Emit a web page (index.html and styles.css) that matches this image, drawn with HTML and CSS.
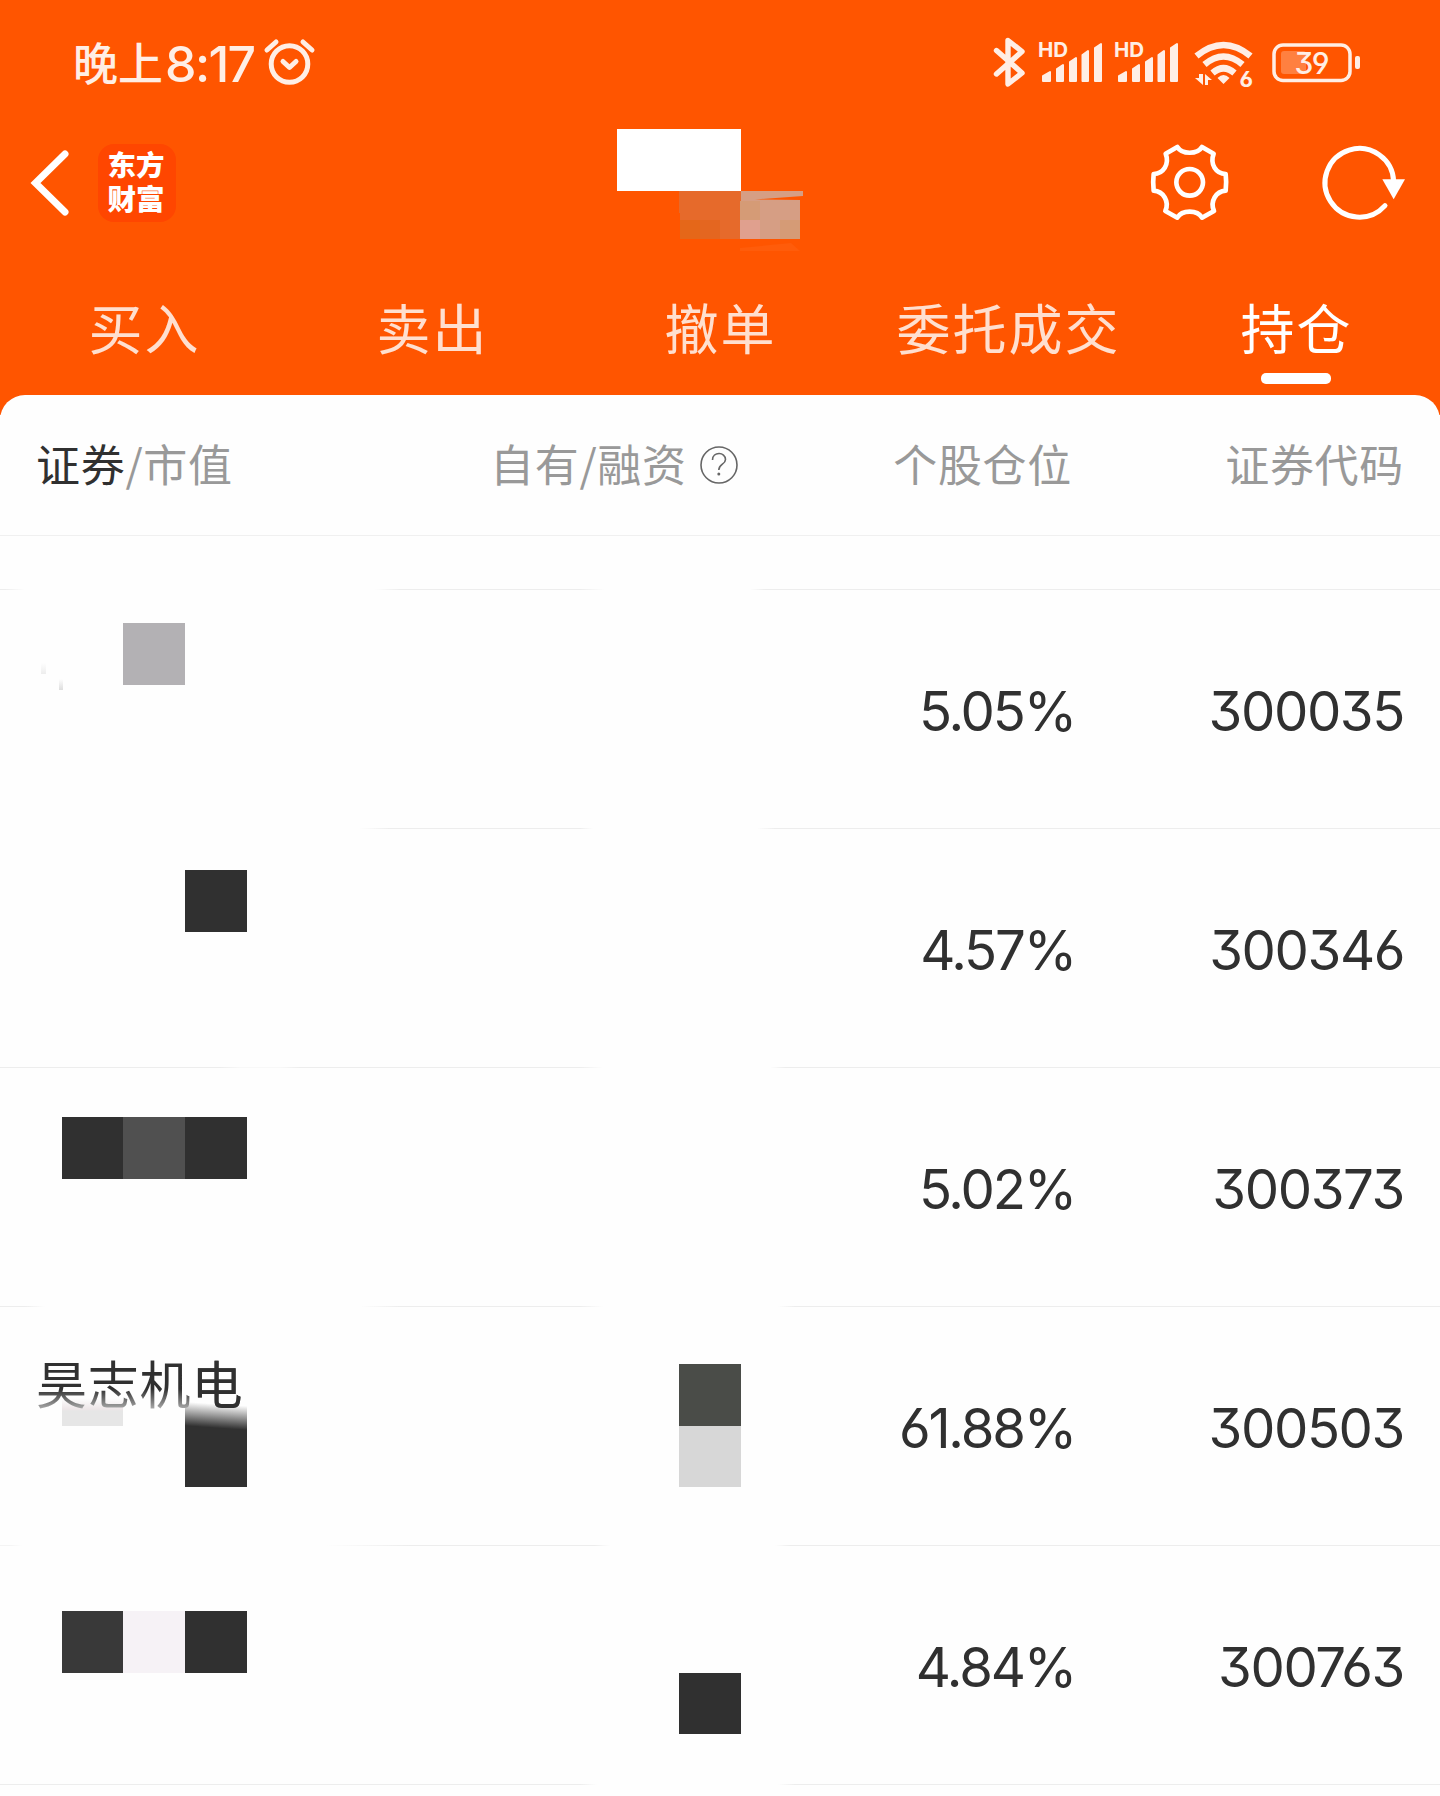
FILE: index.html
```
<!DOCTYPE html>
<html lang="zh-CN">
<head>
  <meta charset="UTF-8">
  <title>持仓</title>
  <link rel="stylesheet" href="styles.css">
</head>
<body>

<header class="header">
  <div class="status-bar">
    <div class="clock"><span class="clock-period">晚上</span><span class="clock-time">8:17</span></div>
    <svg class="alarm" width="52" height="48" viewBox="263 38 52 48">
      <circle cx="289.5" cy="64" r="18.3"/>
      <path d="M267 50L276 42M303 42L312 50M283 61.5L289.5 67.5L296 61.5"/>
    </svg>

    <div class="status-icons">
      <svg class="bluetooth" width="31" height="50" viewBox="994 37 31 50">
        <path d="M996.5 50.5L1022 73L1008 84V40.5L1022 51.5L996.5 74"/>
      </svg>
      <svg class="signal" width="64" height="50" viewBox="1038 38 64 50">
        <text x="1038" y="58">HD</text>
        <path d="M1043 77L1050 73V82H1043ZM1057 70L1063 66V82H1057ZM1070 63L1076 59V82H1070ZM1082.500 56L1088 52V82H1082.500ZM1095 49L1101 45V82H1095Z"/>
      </svg>
      <svg class="signal" width="64" height="50" viewBox="1038 38 64 50">
        <text x="1038" y="58">HD</text>
        <path d="M1043 77L1050 73V82H1043ZM1057 70L1063 66V82H1057ZM1070 63L1076 59V82H1070ZM1082.500 56L1088 52V82H1082.500ZM1095 49L1101 45V82H1095Z"/>
      </svg>
      <svg class="wifi" width="60" height="54" viewBox="1194 37 60 54">
        <path class="arc" d="M1196.500 56Q1223.500 34 1250.500 56M1204.500 64.500Q1223.500 48.500 1242.500 64.500M1212.500 73Q1223.500 63.500 1234.500 73"/>
        <path d="M1217.500 78Q1223.500 72 1229.500 78L1223.500 84Z"/>
        <path d="M1199 74H1203V85L1195 78H1199ZM1205 85V74L1212 80H1208V85Z"/>
        <text x="1239.5" y="86.5">6</text>
      </svg>
      <svg class="battery" width="90" height="40" viewBox="1271 42 90 40">
        <rect class="level" x="1281" y="51" width="25" height="23" rx="3"/>
        <rect class="shell" x="1274" y="45" width="76" height="35.500" rx="9"/>
        <rect x="1355" y="56" width="5" height="13" rx="2"/>
        <text x="1294.500" y="74">39</text>
      </svg>
    </div>
  </div>

  <div class="nav-bar">
    <svg class="back" width="38" height="66" viewBox="31 150 38 66">
      <path d="M65 154L35.500 183L65 212"/>
    </svg>
    <div class="logo">东方<br>财富</div>
    <svg class="gear" width="80" height="77" viewBox="570 434 240 231">
      <circle cx="689" cy="546" r="40"/>
      <path d="M652 440C666 463 712 463 726 440L761 460C749 492 768 520 797 521Q800 546 797 571C768 573 749 603 762 632L726 652C712 628 666 628 652 652L616 632C629 603 610 573 581 571Q578 546 581 521C610 520 629 492 617 460Z"/>
    </svg>
    <svg class="refresh" width="84" height="76" viewBox="1083 435 252 228">
      <path class="ring" d="M1301 545A103 103 0 1 0 1275 617"/>
      <path d="M1267 538H1335L1301 598Z"/>
    </svg>
    <!-- hidden account name -->
    <svg class="account" width="190" height="130" viewBox="617 125 190 130">
      <rect x="617" y="129" width="124" height="62" fill="#fff"/>
      <path d="M679 191H741V239H680V213H679Z" fill="#e66a2b"/>
      <path d="M680 220H700V239H680Z" fill="#e56719"/>
      <path d="M700 220H720V239H700Z" fill="#e46620"/>
      <path d="M741 191H803V196L755 199.500L800 200V239H740V201H741Z" fill="#d69e84"/>
      <path d="M740 201H760V220H740Z" fill="#d59b76"/>
      <path d="M740 220H760V239H740Z" fill="#e0a08e"/>
      <path d="M780 220H800V239H780Z" fill="#d59b76"/>
      <path d="M740 248L791 243L800 251H740Z" fill="#ff5c0a"/>
    </svg>
  </div>

  <nav class="tabs">
    <a class="tab">买入</a>
    <a class="tab">卖出</a>
    <a class="tab">撤单</a>
    <a class="tab">委托成交</a>
    <a class="tab active">持仓</a>
  </nav>
</header>

<main class="sheet">
  <div class="table-head">
    <div><b>证券</b>/市值</div>
    <div class="own">自有/融资
      <svg class="help" width="38" height="38" viewBox="0 0 38 38">
        <circle cx="19" cy="19" r="18"/>
        <path d="M12.500 14C12.500 5.500 25.500 5.500 25.500 13.500C25.500 18.500 18.800 18 18.800 24"/>
        <circle class="dot" cx="18.800" cy="28" r="1.500"/>
      </svg>
    </div>
    <div>个股仓位</div>
    <div>证券代码</div>
  </div>
  <div class="row row-cut"></div>
  <div class="row row-1">
    <div class="name"></div>
    <div class="ratio">5.05%</div>
    <div class="code">300035</div>
    <i class="mask m1"></i><i class="smudge s1"></i><i class="smudge s2"></i>
  </div>
  <div class="row row-2">
    <div class="name"></div>
    <div class="ratio">4.57%</div>
    <div class="code">300346</div>
    <i class="mask m2"></i>
  </div>
  <div class="row row-3">
    <div class="name"></div>
    <div class="ratio">5.02%</div>
    <div class="code">300373</div>
    <i class="mask m3"></i>
  </div>
  <div class="row row-4">
    <i class="mask m4"></i><i class="mask m5"></i><i class="mask m6"></i>
    <div class="name">昊志机<span>电</span></div>
    <div class="ratio">61.88%</div>
    <div class="code">300503</div>
  </div>
  <div class="row row-5">
    <div class="name"></div>
    <div class="ratio">4.84%</div>
    <div class="code">300763</div>
    <i class="mask m7"></i><i class="mask m8"></i>
  </div>
</main>

</body>
</html>
```
FILE: styles.css
```
* {
  box-sizing: border-box;
}

body {
  margin: 0;
  width: 1440px;
  height: 1796px;
  overflow: hidden;
  background: #fefefe;
  font-family: "Noto Sans CJK SC", sans-serif;
  color: #303030;
}

svg {
  display: block;
  flex: none;
  overflow: visible;
}

.header {
  height: 415px;
  background: #ff5500;
  color: #fff;
}

/* status bar */
.status-bar {
  display: flex;
  align-items: center;
  height: 124px;
  padding: 0 79px 0 73px;
  color: #ffeee5;
  fill: #ffeee5;
}

.clock {
  display: flex;
  align-items: center;
  width: 190px;
  font-weight: 500;
  line-height: 60px;
  white-space: nowrap;
}

.clock-period {
  font-size: 45px;
  padding-bottom: 1px;
}

.clock-time {
  font-family: Inter, sans-serif;
  font-size: 50px;
  padding-top: 3px;
  margin-left: 2px;
  letter-spacing: -1.6px;
}

.alarm {
  fill: none;
  stroke: #ffeee5;
  stroke-width: 5;
  stroke-linecap: round;
  stroke-linejoin: round;
}

.status-icons {
  display: flex;
  align-items: center;
  margin-left: auto;
}

.status-icons text {
  font-family: Inter, sans-serif;
  font-weight: 600;
}

.bluetooth {
  fill: none;
  stroke: #ffeee5;
  stroke-width: 5.4;
  stroke-linecap: round;
  stroke-linejoin: round;
  margin-right: 13px;
}

.signal {
  margin-right: 12px;
}

.signal path {
  stroke: #ffeee5;
  stroke-width: 2;
  stroke-linejoin: round;
}

.signal text {
  font-size: 20.5px;
  font-weight: 700;
}

.wifi {
  margin: 3px 17px 0 4px;
}

.wifi .arc {
  fill: none;
  stroke: #ffeee5;
  stroke-width: 6.5;
}

.wifi text {
  font-size: 22px;
  font-weight: 700;
  font-feature-settings: "cv03";
}

.battery .shell {
  fill: none;
  stroke: #ffeee5;
  stroke-width: 3.5;
}

.battery .level {
  fill: #ff8040;
}

.battery text {
  font-size: 30px;
  font-weight: 500;
  letter-spacing: -1.5px;
  font-feature-settings: "cv09", "cv04";
}

/* navigation */
.nav-bar {
  position: relative;
  display: flex;
  align-items: center;
  height: 118px;
  padding: 0 35px 0 31px;
}

.back {
  fill: none;
  stroke: #fff;
  stroke-width: 7;
  stroke-linecap: round;
}

.logo {
  width: 78px;
  height: 78px;
  margin-left: 29px;
  padding: 3px 2px 0 0;
  border-radius: 16px;
  background: #ff4600;
  font-size: 28.5px;
  font-weight: 900;
  line-height: 34px;
  text-align: center;
}

.gear {
  margin-left: auto;
  fill: none;
  stroke: #fff;
  stroke-width: 14;
  stroke-linejoin: round;
}

.refresh {
  margin-left: 91px;
  fill: #fff;
}

.refresh .ring {
  fill: none;
  stroke: #fff;
  stroke-width: 15;
  stroke-linecap: round;
}

.account {
  position: absolute;
  left: 617px;
  top: 1px;
}

/* tabs */
.tabs {
  display: grid;
  grid-template-columns: repeat(5, 1fr);
  height: 153px;
}

.tab {
  display: flex;
  flex-direction: column;
  align-items: center;
  padding-top: 45px;
  font-size: 54px;
  line-height: 80px;
  letter-spacing: 2px;
  text-indent: 1px;
  color: #ffdfcf;
}

.tab.active {
  color: #fff;
}

.tab.active::after {
  content: "";
  width: 70px;
  height: 11px;
  margin-top: 6px;
  border-radius: 5px;
  background: #fff;
}

/* holdings */
.sheet {
  margin-top: -20px;
  border-radius: 25px 25px 0 0;
  background: #fefefe;
}

.table-head {
  display: grid;
  grid-template-columns: 454px 250px 332px 332px;
  height: 141px;
  padding: 0 36px;
  border-bottom: 1px solid #f0f0f0;
  font-size: 44px;
  line-height: 136px;
  letter-spacing: 0.7px;
  color: #999;
  white-space: nowrap;
}

.table-head b {
  font-weight: 400;
  color: #303030;
}

.table-head div:nth-child(n+3) {
  text-align: right;
}

.own {
  display: flex;
  align-items: center;
  gap: 13px;
  height: 136px;
}

.help {
  margin-top: 3px;
  fill: none;
  stroke: #666;
  stroke-width: 1.6;
}

.help .dot {
  fill: #666;
  stroke: none;
}

.row {
  --line: #ededed;
  position: relative;
  display: grid;
  grid-template-columns: 705px 334px 329px;
  height: 239px;
  padding: 0 36px;
  background-repeat: no-repeat;
  background-position: 0 100%;
  background-size: 100% 1px;
}

.row-cut {
  height: 54px;
  background-image: linear-gradient(90deg, var(--line) 5px, transparent 25px 375px, var(--line) 400px 580px, transparent 605px 750px, var(--line) 765px);
}

.row-1 {
  background-image: linear-gradient(90deg, transparent 360px, var(--line) 390px 580px, transparent 593px 757px, var(--line) 775px);
}

.row-2 {
  background-image: linear-gradient(90deg, var(--line) 220px, #f8f8f8 240px 280px, var(--line) 300px 580px, transparent 603px 770px, var(--line) 785px);
}

.row-3 {
  background-image: linear-gradient(90deg, var(--line) 25px, transparent 45px 360px, var(--line) 400px 580px, transparent 603px 778px, var(--line) 795px);
}

.row-4 {
  background-image: linear-gradient(90deg, #f4f4f4 10px, transparent 22px 325px, var(--line) 410px 595px, transparent 610px 775px, var(--line) 790px);
}

.row-5 {
  background-image: linear-gradient(90deg, var(--line) 580px, transparent 597px 778px, var(--line) 795px);
}

/* bottom of the name fades out next to the mosaic */
.name {
  position: relative;
  height: 112px;
  padding-top: 37px;
  font-size: 51px;
  line-height: 76px;
  letter-spacing: 0.8px;
  color: transparent;
  background: linear-gradient(#303030 82px, #aaa 102px);
  -webkit-background-clip: text;
  background-clip: text;
}

.name span {
  color: #303030;
}

.ratio,
.code {
  font-family: Inter, sans-serif;
  font-size: 54.5px;
  line-height: 242px;
  text-align: right;
  font-feature-settings: "cv09", "cv03", "cv04";
  letter-spacing: -1.4px;
}

.ratio {
  letter-spacing: -2.2px;
}

/* mosaic blocks over the hidden values */
.mask {
  position: absolute;
  width: 62px;
  height: 62px;
  background: #303030;
}

.m1 {
  left: 123px;
  top: 33px;
  background: #b3b1b4;
}

.m2 {
  left: 185px;
  top: 41px;
}

.m3 {
  left: 62px;
  top: 49px;
  width: 185px;
  background: linear-gradient(90deg, #303030 61px, #505050 61px 123px, #303030 123px);
}

.m4 {
  left: 62px;
  top: 91px;
  width: 61px;
  height: 28px;
  background: linear-gradient(#fefefe, #eee6e8 11px, #e6e6e6 13px);
}

.m5 {
  left: 185px;
  top: 91px;
  height: 89px;
  background: linear-gradient(184deg, #fefefe 8px, #303030 32px);
}

.m6 {
  left: 679px;
  top: 57px;
  height: 123px;
  background: linear-gradient(#4a4c48 62px, #d7d7d7 62px);
}

.m7 {
  left: 62px;
  top: 65px;
  width: 185px;
  background: linear-gradient(90deg, #393939 61px, #f6f2f6 61px 123px, #303030 123px);
}

.m8 {
  left: 679px;
  top: 127px;
  height: 61px;
}

.smudge {
  position: absolute;
  background: linear-gradient(#fefefe, #ddd);
}

.s1 {
  left: 41px;
  top: 73px;
  width: 5px;
  height: 11px;
  opacity: 0.5;
}

.s2 {
  left: 59px;
  top: 89px;
  width: 4px;
  height: 11px;
}
```
